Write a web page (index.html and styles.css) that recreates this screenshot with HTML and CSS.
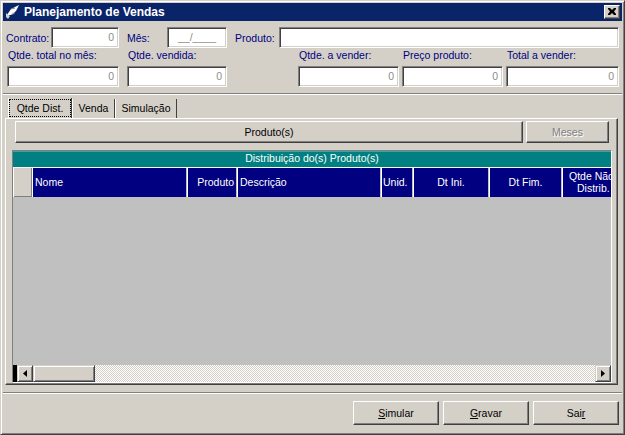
FILE: index.html
```html
<!DOCTYPE html>
<html lang="pt">
<head>
<meta charset="utf-8">
<title>Planejamento de Vendas</title>
<link rel="stylesheet" href="styles.css">
</head>
<body>
<div class="window">
  <div class="titlebar">
    <svg class="app-icon" width="16" height="16" viewBox="0 0 16 16">
      <path d="M2 11 L6 5 L14 1 L11 7 L6 11 Z" fill="#ffffff"/>
      <path d="M6 11 L11 7 L9 10 Z" fill="#a0a0a0"/>
      <path d="M1 9 L5 12 L3 15 L1 13 Z" fill="#d4d0c8"/>
      <path d="M6 5 L10 4" stroke="#808080" stroke-width="1" fill="none"/>
    </svg>
    <span class="title">Planejamento de Vendas</span>
    <div class="close-btn">
      <svg width="8" height="7" viewBox="0 0 8 7"><path d="M0 0h2l2 2 2-2h2v1l-2 2.5 2 2.5v1h-2l-2-2-2 2h-2v-1l2-2.5-2-2.5z" fill="#000"/></svg>
    </div>
  </div>

  <div class="content">
    <div class="row1">
      <span class="lbl lbl-contrato">Contrato:</span>
      <div class="field f-contrato">0</div>
      <span class="lbl lbl-mes">Mês:</span>
      <div class="field f-mes">__/____</div>
      <span class="lbl lbl-produto">Produto:</span>
      <div class="field f-produto"></div>
    </div>

    <div class="row2">
      <div class="col c1"><span class="lbl">Qtde. total no mês:</span><div class="field">0</div></div>
      <div class="col c2"><span class="lbl">Qtde. vendida:</span><div class="field">0</div></div>
      <div class="col c3"><span class="lbl">Qtde. a vender:</span><div class="field">0</div></div>
      <div class="col c4"><span class="lbl">Preço produto:</span><div class="field">0</div></div>
      <div class="col c5"><span class="lbl">Total a vender:</span><div class="field">0</div></div>
    </div>

    <div class="sep sep-top"></div>

    <div class="tabs">
      <div class="tab tab-active t1">Qtde Dist.</div>
      <div class="tab t2">Venda</div>
      <div class="tab t3">Simulação</div>
    </div>

    <div class="panel">
      <div class="btn-row">
        <div class="btn btn-produtos">Produto(s)</div>
        <div class="btn btn-meses disabled">Meses</div>
      </div>

      <div class="grid">
        <div class="grid-caption">Distribuição do(s) Produto(s)</div>
        <div class="grid-header">
          <div class="hcell ind"></div>
          <div class="hcell h-nome left">Nome</div>
          <div class="hcell h-produto right">Produto</div>
          <div class="hcell h-desc left">Descrição</div>
          <div class="hcell h-unid left">Unid.</div>
          <div class="hcell h-ini center">Dt Ini.</div>
          <div class="hcell h-fim center">Dt Fim.</div>
          <div class="hcell h-qtde"><span class="q1">Qtde Não</span><span class="q2">Distrib.</span></div>
        </div>
        <div class="grid-body"></div>
        <div class="hscroll">
          <div class="sb-corner"></div>
          <div class="sb-btn">
            <svg width="4" height="7" viewBox="0 0 4 7"><path d="M4 0V7L0 3.5Z" fill="#000"/></svg>
          </div>
          <div class="sb-thumb"></div>
          <div class="sb-track"></div>
          <div class="sb-btn">
            <svg width="4" height="7" viewBox="0 0 4 7"><path d="M0 0V7L4 3.5Z" fill="#000"/></svg>
          </div>
        </div>
      </div>
    </div>

    <div class="sep sep-bottom"></div>

    <div class="actions">
      <div class="btn act"><span><u>S</u>imular</span></div>
      <div class="btn act"><span><u>G</u>ravar</span></div>
      <div class="btn act"><span>Sai<u>r</u></span></div>
    </div>
  </div>
</div>
</body>
</html>
```

FILE: styles.css
```css
* { box-sizing: border-box; }

html, body {
  margin: 0;
  padding: 0;
  background: #d4d0c8;
}

body {
  font-family: "Liberation Sans", Arial, sans-serif;
  font-size: 10.5px;
  color: #000;
}

.window {
  width: 625px;
  height: 435px;
  background: #d4d0c8;
  border: 1px solid;
  border-color: #d4d0c8 #404040 #404040 #d4d0c8;
  box-shadow: inset 1px 1px #ffffff, inset -1px -1px #808080;
  padding: 2px;
  display: flex;
  flex-direction: column;
  overflow: hidden;
}

/* Title bar */
.titlebar {
  height: 18px;
  background: #0a246a;
  display: flex;
  align-items: center;
  padding: 0 2px 0 2px;
  flex-shrink: 0;
}

.app-icon {
  display: block;
  flex-shrink: 0;
}

.title {
  color: #fff;
  font-weight: bold;
  font-size: 12px;
  margin-left: 3px;
  flex: 1;
  white-space: nowrap;
}

.close-btn {
  width: 16px;
  height: 14px;
  background: #d4d0c8;
  border: 1px solid;
  border-color: #fff #404040 #404040 #fff;
  box-shadow: inset -1px -1px #808080;
  display: flex;
  align-items: center;
  justify-content: center;
  padding-bottom: 1px;
}

.close-btn svg { display: block; }

/* Content */
.content {
  padding: 0 3px;
  display: flex;
  flex-direction: column;
}

.lbl {
  color: #000080;
  white-space: nowrap;
}

.field {
  height: 21px;
  background: #fff;
  border: 1px solid;
  border-color: #808080 #fff #fff #808080;
  box-shadow: inset 1px 1px #404040, inset -1px -1px #d4d0c8;
  color: #8c8c8c;
  text-align: right;
  padding: 0 4px;
  line-height: 19px;
  white-space: nowrap;
  overflow: hidden;
}

.row1 {
  margin-top: 6px;
  height: 21px;
  display: flex;
  align-items: center;
}

.lbl-contrato { width: 45px; }
.f-contrato { width: 68px; }
.lbl-mes { width: 40px; margin-left: 8px; }
.f-mes { width: 60px; text-align: center; color: #8c8c8c; }
.lbl-produto { width: 44px; margin-left: 8px; }
.f-produto { flex: 1; }

.row2 {
  display: flex;
}

.col {
  display: flex;
  flex-direction: column;
}

.col .lbl {
  height: 14px;
  line-height: 14px;
  padding-left: 1px;
}

.col .field { margin-top: 4px; }

.c1 { width: 112px; margin-left: 1px; }
.c2 { width: 100px; margin-left: 8px; }
.c3 { width: 101px; margin-left: 71px; }
.c4 { width: 101px; margin-left: 3px; }
.c5 { flex: 1; margin-left: 3px; }

.sep {
  height: 2px;
  border-top: 1px solid #808080;
  border-bottom: 1px solid #fff;
  margin-left: -3px;
  margin-right: -3px;
}

.sep-top { margin-top: 6px; }
.sep-bottom { margin-top: 7px; }

/* Tabs */
.tabs {
  margin-top: 3px;
  height: 20px;
  display: flex;
  align-items: flex-end;
  padding-left: 2px;
  position: relative;
  z-index: 1;
}

.tab {
  height: 19px;
  line-height: 18px;
  text-align: center;
  border-left: 1px solid #fff;
  border-right: 1px solid #404040;
  white-space: nowrap;
}

.tab-active {
  height: 20px;
  line-height: 20px;
  outline: 1px dotted #000;
  outline-offset: -2px;
}

.t1 { width: 64px; }
.t2 { width: 43px; }
.t3 { width: 62px; }

/* Panel */
.panel {
  height: 267px;
  margin: 0 1px 0 -1px;
  border: 1px solid;
  border-color: #fff #404040 #404040 #fff;
  box-shadow: inset -1px -1px #808080;
  display: flex;
  flex-direction: column;
}

.btn {
  background: #d4d0c8;
  border: 1px solid;
  border-color: #fff #404040 #404040 #fff;
  box-shadow: inset -1px -1px #808080;
  display: flex;
  align-items: center;
  justify-content: center;
  white-space: nowrap;
}

.btn-row {
  margin: 2px 8px 0 9px;
  height: 22px;
  display: flex;
  gap: 3px;
}

.btn-produtos { flex: 1; }
.btn-meses { width: 83px; }

.disabled {
  color: #808080;
  text-shadow: 1px 1px #fff;
}

/* Grid */
.grid {
  margin: 7px 5px 0 6px;
  height: 233px;
  border: 1px solid;
  border-color: #808080 #fff #fff #808080;
  display: flex;
  flex-direction: column;
  overflow: hidden;
  background: #c0c0c0;
}

.grid-caption {
  height: 16px;
  background: #008080;
  color: #fff;
  text-align: center;
  line-height: 15px;
  white-space: nowrap;
  box-shadow: inset 0 1px #40a0a0;
}

.grid-header {
  height: 30px;
  display: flex;
  flex-shrink: 0;
}

.hcell {
  flex-shrink: 0;
  background: #000080;
  color: #fff;
  display: flex;
  align-items: center;
  box-shadow: inset 1px 1px #ffffff, inset -1px 0 #c0c0c0;
  white-space: nowrap;
  line-height: 12px;
}

.hcell.left { justify-content: flex-start; padding-left: 3px; }
.hcell.right { justify-content: flex-end; padding-right: 3px; text-align: right; }
.hcell.center { justify-content: center; }

.hcell.ind {
  width: 19px;
  background: #d4d0c8;
  box-shadow: inset 1px 1px #fff, inset -1px -1px #808080;
}

.h-nome { width: 155px; }
.h-produto { width: 50px; }
.h-desc { width: 144px; }
.h-unid { width: 32px; padding-left: 2px !important; }
.h-ini { width: 76px; }
.h-fim { width: 73px; }

.h-qtde {
  width: 60px;
  flex-direction: column;
  align-items: flex-start;
  justify-content: center;
  box-shadow: inset 1px 1px #ffffff;
}

.q1 { padding-left: 7px; }
.q2 { padding-left: 15px; }

.grid-body {
  flex: 1;
  background: #c0c0c0;
}

.hscroll {
  height: 17px;
  display: flex;
  flex-shrink: 0;
}

.sb-corner {
  width: 4px;
  background: #000;
}

.sb-btn {
  width: 16px;
  background: #d4d0c8;
  border: 1px solid;
  border-color: #d4d0c8 #404040 #404040 #d4d0c8;
  box-shadow: inset 1px 1px #fff, inset -1px -1px #808080;
  display: flex;
  align-items: center;
  justify-content: center;
}

.sb-btn svg { display: block; }

.sb-thumb {
  width: 62px;
  background: #d4d0c8;
  border: 1px solid;
  border-color: #d4d0c8 #404040 #404040 #d4d0c8;
  box-shadow: inset 1px 1px #fff, inset -1px -1px #808080;
}

.sb-track {
  flex: 1;
  background: repeating-conic-gradient(#ffffff 0 25%, #d4d0c8 0 50%) 0 0 / 2px 2px;
}

/* Bottom buttons */
.actions {
  margin-top: 7px;
  display: flex;
  justify-content: flex-end;
  gap: 4px;
}

.act {
  width: 86px;
  height: 24px;
}
```
